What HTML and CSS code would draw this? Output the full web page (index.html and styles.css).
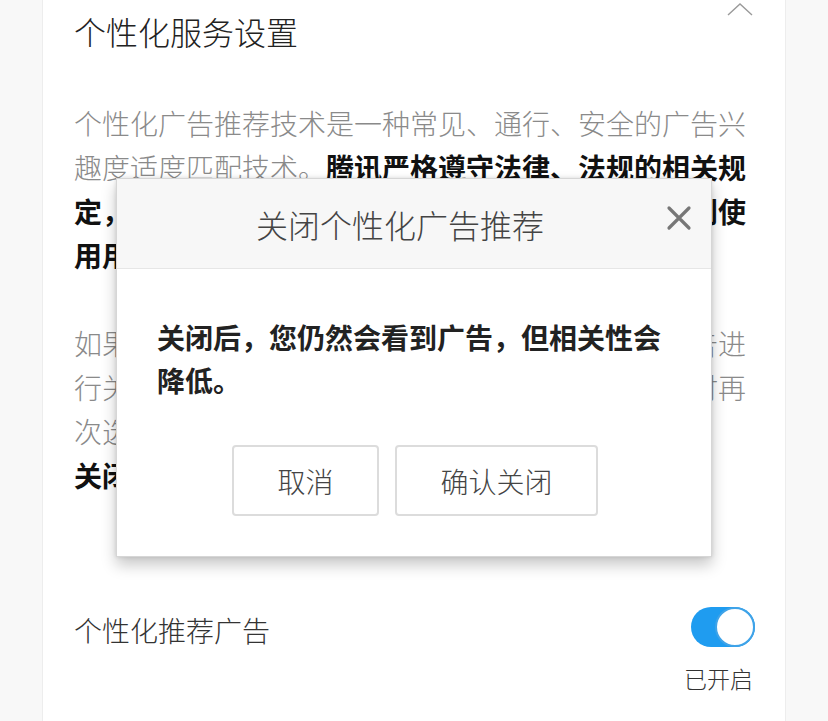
FILE: index.html
```html
<!DOCTYPE html>
<html lang="zh-CN">
<head>
    <meta charset="UTF-8">
    <meta name="viewport" content="width=device-width, initial-scale=1.0">
    <title>个性化服务设置</title>
    <link rel="stylesheet" href="styles.css">
</head>
<body>
    <div class="card">
        <div class="card-head">
            <h1>个性化服务设置</h1>
            <svg class="chevron" width="26" height="14" viewBox="0 0 26 14">
                <polyline points="1,13 13,2 25,13" fill="none" stroke="#9a9a9a" stroke-width="1.4"/>
            </svg>
        </div>

        <p class="desc">个性化广告推荐技术是一种常见、通行、安全的广告兴趣度适度匹配技术。<b>腾讯严格遵守法律、法规的相关规定，在保护个人信息安全的前提下，会依照相关规则使用用户信息均经过处理。</b></p>

        <p class="desc">如果你不想看到个性化广告，可以在此对个性化广告进行关闭，关闭后你仍可以在本页面或相关设置中随时再次选择开启。<br><b>关闭后广告相关性降低。</b></p>

        <div class="setting">
            <span class="setting-name">个性化推荐广告</span>
            <div class="setting-state">
                <span class="toggle on"><span class="knob"></span></span>
                <span class="state-text">已开启</span>
            </div>
        </div>
    </div>

    <div class="dialog">
        <div class="dialog-head">
            <span class="dialog-title">关闭个性化广告推荐</span>
            <svg class="dialog-close" width="26" height="26" viewBox="0 0 26 26">
                <path d="M3 3 L23 23 M23 3 L3 23" stroke="#777" stroke-width="3.2" stroke-linecap="round"/>
            </svg>
        </div>
        <div class="dialog-body">
            <p class="dialog-text">关闭后，您仍然会看到广告，但相关性会降低。</p>
            <div class="dialog-actions">
                <button class="btn btn-cancel">取消</button>
                <button class="btn btn-confirm">确认关闭</button>
            </div>
        </div>
    </div>
</body>
</html>
```

FILE: styles.css
```css
body {
    margin: 0;
    padding: 0;
    background-color: #f8f8f8;
    font-family: "Noto Sans CJK SC", "Noto Sans", sans-serif;
    height: 721px;
    overflow: hidden;
}
.card {
    margin-left: 42px;
    width: 675px;
    height: 721px;
    padding: 0 36px 0 31px;
    background-color: #ffffff;
    border-left: 1px solid #ededed;
    border-right: 1px solid #ededed;
}
.card-head {
    display: flex;
    justify-content: space-between;
    align-items: flex-start;
    padding-top: 9px;
}
.card-head h1 {
    margin: 0;
    font-size: 32px;
    line-height: 44px;
    font-weight: 300;
    color: #222;
}
.chevron {
    margin-top: -7px;
    margin-right: -4px;
}
.desc {
    margin: 48px 0 0;
    font-size: 28px;
    line-height: 44px;
    font-weight: 300;
    color: #8a8a8a;
}
.desc + .desc {
    margin-top: 44px;
}
.desc b {
    font-weight: 700;
    color: #111;
}
.setting {
    display: flex;
    justify-content: space-between;
    align-items: flex-start;
    margin-top: 110px;
    margin-right: -6px;
}
.setting-name {
    margin-top: 1px;
    font-size: 28px;
    line-height: 44px;
    font-weight: 300;
    color: #333;
}
.setting-state {
    display: flex;
    flex-direction: column;
    align-items: flex-end;
}
.toggle {
    display: block;
    position: relative;
    width: 64px;
    height: 40px;
    border-radius: 20px;
    background-color: #eee;
}
.toggle.on {
    background-color: #1f9cf0;
}
.toggle .knob {
    position: absolute;
    right: 0;
    top: 0;
    width: 36px;
    height: 36px;
    border-radius: 50%;
    background-color: #fff;
    border: 2px solid #3fa3e8;
}
.state-text {
    margin-top: 15px;
    margin-right: 2px;
    font-size: 23px;
    line-height: 32px;
    font-weight: 300;
    color: #333;
}

/* confirmation dialog floating over the page */
.dialog {
    position: absolute;
    left: 116px;
    top: 178px;
    width: 594px;
    background-color: #ffffff;
    border: 1px solid #d6d6d6;
    box-shadow: 0 8px 14px rgba(0, 0, 0, 0.22), 0 0 4px rgba(0, 0, 0, 0.12);
}
.dialog-head {
    position: relative;
    height: 89px;
    background-color: #f7f7f7;
    border-bottom: 1px solid #e6e6e6;
    display: flex;
    justify-content: center;
    align-items: center;
}
.dialog-title {
    margin-left: -28px;
    font-size: 32px;
    font-weight: 300;
    color: #444;
}
.dialog-close {
    position: absolute;
    right: 19px;
    top: 26px;
    filter: blur(0.6px);
}
.dialog-body {
    padding: 47px 40px 40px;
}
.dialog-text {
    margin: 0;
    font-size: 28px;
    line-height: 43px;
    font-weight: 700;
    color: #222;
}
.dialog-actions {
    display: flex;
    justify-content: center;
    gap: 16px;
    margin-top: 43px;
    margin-left: 2px;
}
.btn {
    height: 71px;
    border: 2px solid #dcdcdc;
    border-radius: 4px;
    background-color: #fff;
    font-family: "Noto Sans CJK SC", "Noto Sans", sans-serif;
    font-size: 28px;
    font-weight: 300;
    color: #444;
}
.btn-cancel {
    width: 147px;
}
.btn-confirm {
    width: 203px;
}
```
